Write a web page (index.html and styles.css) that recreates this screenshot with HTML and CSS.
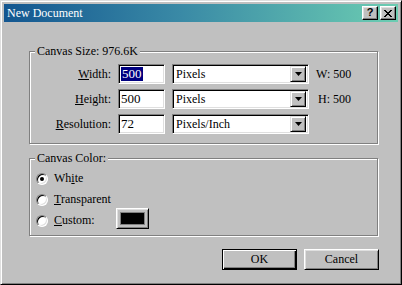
FILE: index.html
```html
<!DOCTYPE html>
<html lang="en">
<head>
    <meta charset="UTF-8">
    <meta name="viewport" content="width=device-width, initial-scale=1.0">
    <title>New Document</title>
    <link rel="stylesheet" href="styles.css">
</head>
<body>
    <div class="window">
        <div class="titlebar">
            <span class="title">New Document</span>
            <div class="caption-buttons">
                <button class="cap-btn help">?</button>
                <button class="cap-btn close">
                    <svg width="8" height="7" viewBox="0 0 8 7"><path d="M0 0h2v1h1v1h2v-1h1v-1h2v1h-1v1h-1v1h-1v1h1v1h1v1h1v1h-2v-1h-1v-1h-2v1h-1v1h-2v-1h1v-1h1v-1h1v-1h-1v-1h-1v-1h-1z" fill="#000"/></svg>
                </button>
            </div>
        </div>

        <div class="content">
            <fieldset class="group size-group">
                <legend>Canvas Size: 976.6K</legend>
                <div class="size-grid">
                    <label class="field-label" for="width"><u>W</u>idth:</label>
                    <div class="textbox" id="width"><span class="selected">500</span></div>
                    <div class="combo"><span class="combo-text">Pixels</span><span class="drop-btn"><svg width="7" height="4" viewBox="0 0 7 4"><path d="M0 0h7l-3.5 4z" fill="#000"/></svg></span></div>
                    <span class="info">W: 500</span>

                    <label class="field-label" for="height"><u>H</u>eight:</label>
                    <div class="textbox" id="height">500</div>
                    <div class="combo"><span class="combo-text">Pixels</span><span class="drop-btn"><svg width="7" height="4" viewBox="0 0 7 4"><path d="M0 0h7l-3.5 4z" fill="#000"/></svg></span></div>
                    <span class="info info-h">H: 500</span>

                    <label class="field-label" for="resolution"><u>R</u>esolution:</label>
                    <div class="textbox" id="resolution">72</div>
                    <div class="combo"><span class="combo-text">Pixels/Inch</span><span class="drop-btn"><svg width="7" height="4" viewBox="0 0 7 4"><path d="M0 0h7l-3.5 4z" fill="#000"/></svg></span></div>
                    <span class="info"></span>
                </div>
            </fieldset>

            <fieldset class="group color-group">
                <legend>Canvas Color:</legend>
                <div class="radio-row">
                    <span class="radio checked"></span>
                    <span class="radio-label">Wh<u>i</u>te</span>
                </div>
                <div class="radio-row">
                    <span class="radio"></span>
                    <span class="radio-label"><u>T</u>ransparent</span>
                </div>
                <div class="radio-row">
                    <span class="radio"></span>
                    <span class="radio-label custom-label"><u>C</u>ustom:</span>
                    <button class="swatch"><span class="swatch-color"></span></button>
                </div>
            </fieldset>

            <div class="actions">
                <button class="btn default">OK</button>
                <button class="btn">Cancel</button>
            </div>
        </div>
    </div>
</body>
</html>
```

FILE: styles.css
```css
body {
    margin: 0;
    background-color: #c0c0c0;
    font-family: "Liberation Serif", serif;
    font-size: 12px;
    color: #000;
}
.window {
    width: 402px;
    height: 285px;
    box-sizing: border-box;
    border: 1px solid;
    border-color: #dfdfdf #000 #000 #dfdfdf;
    box-shadow: inset 1px 1px 0 #fff, inset -1px -1px 0 #808080;
    padding: 3px;
    background-color: #c0c0c0;
}
.titlebar {
    height: 18px;
    display: flex;
    align-items: center;
    justify-content: space-between;
    background: linear-gradient(to right, #135690, #3a8aa6 45%, #6ccdb2);
    padding: 0 2px 0 3px;
}
.title {
    color: #fff;
    font-size: 12px;
    line-height: 18px;
}
.caption-buttons {
    display: flex;
    gap: 2px;
}
.cap-btn {
    width: 16px;
    height: 14px;
    padding: 0;
    margin: 0;
    box-sizing: border-box;
    background-color: #c0c0c0;
    border: 1px solid;
    border-color: #fff #000 #000 #fff;
    box-shadow: inset -1px -1px 0 #808080, inset 1px 1px 0 #dfdfdf;
    display: flex;
    align-items: center;
    justify-content: center;
    font-family: "Liberation Sans", sans-serif;
    font-weight: bold;
    font-size: 11px;
    line-height: 1;
    color: #000;
}
.cap-btn.help {
    padding-bottom: 1px;
}
.content {
    padding-top: 23px;
}
.group {
    margin: 0 20px 0 25px;
    border: 1px solid #808080;
    box-shadow: inset 1px 1px 0 #fff, 1px 1px 0 #fff;
    min-width: 0;
    font-family: inherit;
}
.group legend {
    padding: 0 2px;
    line-height: 13px;
    background-color: #c0c0c0;
}
.size-group {
    padding: 6px 5px 9px 5px;
}
.size-grid {
    display: grid;
    grid-template-columns: 76px 47px 137px auto;
    grid-auto-rows: 20px;
    column-gap: 7px;
    row-gap: 5px;
    align-items: center;
}
.field-label {
    text-align: right;
}
.textbox,
.combo {
    height: 20px;
    box-sizing: border-box;
    border: 1px solid;
    border-color: #808080 #fff #fff #808080;
    box-shadow: inset 1px 1px 0 #000, inset -1px -1px 0 #dfdfdf;
    background-color: #fff;
    display: flex;
    align-items: center;
}
.textbox {
    padding-left: 2px;
    font-size: 13px;
}
.selected {
    background-color: #000080;
    color: #fff;
    padding: 0 1px;
    line-height: 14px;
}
.combo {
    justify-content: space-between;
    padding: 2px;
}
.combo-text {
    padding-left: 1px;
}
.drop-btn {
    width: 16px;
    height: 16px;
    box-sizing: border-box;
    background-color: #c0c0c0;
    border: 1px solid;
    border-color: #dfdfdf #000 #000 #dfdfdf;
    box-shadow: inset 1px 1px 0 #fff, inset -1px -1px 0 #808080;
    display: flex;
    align-items: center;
    justify-content: center;
}
.info {
    white-space: nowrap;
}
.info-h {
    padding-left: 2px;
}
.color-group {
    margin-top: 8px;
    padding: 3px 5px 4px 5px;
}
.radio-row {
    height: 21px;
    display: flex;
    align-items: center;
    gap: 6px;
    margin-left: 1px;
}
.radio {
    width: 12px;
    height: 12px;
    box-sizing: border-box;
    border-radius: 50%;
    border: 1px solid;
    border-color: #808080 #fff #fff #808080;
    box-shadow: inset 1px 1px 0 #000, inset -1px -1px 0 #dfdfdf;
    background-color: #fff;
    display: flex;
    align-items: center;
    justify-content: center;
}
.radio.checked::after {
    content: "";
    width: 4px;
    height: 4px;
    border-radius: 50%;
    background-color: #000;
}
.custom-label {
    width: 56px;
}
.swatch {
    width: 33px;
    height: 21px;
    margin: -4px 0 0 0;
    padding: 0;
    box-sizing: border-box;
    background-color: #c0c0c0;
    border: 1px solid;
    border-color: #fff #000 #000 #fff;
    box-shadow: inset 1px 1px 0 #dfdfdf, inset -1px -1px 0 #808080;
    display: flex;
    align-items: center;
    justify-content: center;
}
.swatch-color {
    width: 23px;
    height: 11px;
    background-color: #000;
    border: 1px solid #808080;
}
.actions {
    display: flex;
    justify-content: flex-end;
    gap: 7px;
    margin: 13px 19px 0 0;
}
.btn {
    width: 75px;
    height: 21px;
    padding: 0;
    box-sizing: border-box;
    background-color: #c0c0c0;
    font-family: "Liberation Serif", serif;
    font-size: 12px;
    color: #000;
    border: 1px solid;
    border-color: #fff #000 #000 #fff;
    box-shadow: inset 1px 1px 0 #dfdfdf, inset -1px -1px 0 #808080;
}
.btn.default {
    border-color: #000;
    box-shadow: inset 1px 1px 0 #fff, inset -1px -1px 0 #000, inset -2px -2px 0 #808080;
}
```
